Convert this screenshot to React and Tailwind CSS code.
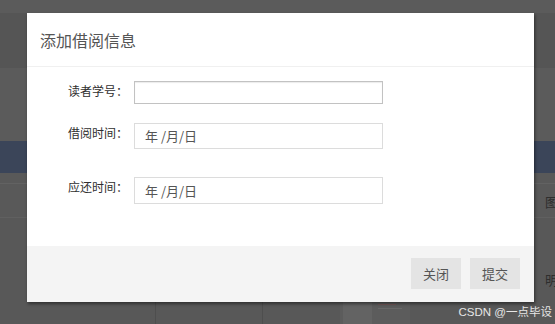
import React from "react";

const font = { fontFamily: '"Noto Sans CJK SC", "Noto Sans", sans-serif' };

function Row({ label, children, className = "" }) {
  return (
    <div className={`flex items-start ${className}`}>
      <div className="w-[107px] shrink-0 pr-[6px] text-right text-[12px] leading-[19px] text-[#2f2f2f]">
        {label}
      </div>
      {children}
    </div>
  );
}

export default function App() {
  return (
    <div className="relative h-[324px] w-[555px] overflow-hidden bg-[#5a5a5a]" style={font}>
      {/* background page */}
      <div className="flex h-full flex-col">
        <div className="h-[13px] bg-[#5b5b5b]" />
        <div className="h-[55px] bg-[#555555]" />
        <div className="h-[73px] bg-[#5b5b5b]" />
        <div className="h-[32px] bg-[#3b4559]" />
        <div className="h-[11px] border-b border-[#626262] bg-[#595959]" />
        <div className="flex h-[34px] justify-end border-b border-[#606060] bg-[#595959]">
          <span className="mt-[8px] mr-[-3px] text-[13px] text-[#2e2e2e]">图</span>
        </div>
        <div className="flex flex-1 flex-col bg-[#585858]">
          <div className="flex h-[73px] items-end justify-end">
            <span className="mb-[2px] mr-[-3px] text-[13px] text-[#2e2e2e]">明</span>
          </div>
          <div className="flex flex-1">
            <div className="ml-[155px] w-[108px] border-x border-[#4e4e4e]" />
            <div className="ml-[77px] flex w-[70px] gap-[6px] bg-[#5c5c5c] px-[3px] pt-[3px]">
              <div className="flex-1 bg-[#636363]" />
              <div className="flex flex-1 flex-col gap-[3px] pt-[2px]">
                <div className="h-[1px] w-[20px] bg-[#735858]" />
                <div className="h-[1px] w-[26px] bg-[#686868]" />
                <div className="h-[1px] w-[18px] bg-[#735858]" />
                <div className="h-[1px] w-[24px] bg-[#686868]" />
              </div>
            </div>
          </div>
        </div>
      </div>

      {/* watermark */}
      <div
        className="absolute right-[3px] bottom-[4px] text-[11.5px] leading-[16px] text-[#e6e6e6]"
        style={{ fontFamily: '"Liberation Sans", "Noto Sans CJK SC", sans-serif' }}
      >
        CSDN @一点毕设
      </div>

      {/* modal */}
      <div className="absolute left-[27px] top-[13px] flex h-[289px] w-[507px] flex-col bg-white shadow-[1px_2px_3px_rgba(0,0,0,0.45)]">
        <div className="flex h-[54px] shrink-0 items-center border-b border-[#f0f0f0] pl-[13px]">
          <span className="text-[16px] leading-[20px] text-[#555]">添加借阅信息</span>
        </div>
        <div className="flex-1 pt-[14px]">
          <Row label="读者学号：">
            <div className="h-[23px] w-[249px] border border-[#c2c2c2] bg-white shadow-[inset_0_1px_1px_rgba(0,0,0,0.08)]" />
          </Row>
          <Row label="借阅时间：" className="mt-[19px]">
            <div className="flex h-[26px] w-[249px] items-center border border-[#dcdcdc] pl-[10px] text-[13px] text-[#555]">
              年 /月/日
            </div>
          </Row>
          <Row label="应还时间：" className="mt-[28px]">
            <div className="flex h-[27px] w-[249px] items-center border border-[#dcdcdc] pl-[10px] text-[13px] text-[#555]">
              年 /月/日
            </div>
          </Row>
        </div>
        <div className="flex h-[56px] shrink-0 items-start justify-end gap-[9px] bg-[#f4f4f4] pr-[14px] pt-[12px]">
          <button className="h-[31px] w-[50px] bg-[#e4e4e4] text-[13px] text-[#555]">关闭</button>
          <button className="h-[31px] w-[50px] bg-[#e4e4e4] text-[13px] text-[#555]">提交</button>
        </div>
      </div>
    </div>
  );
}
